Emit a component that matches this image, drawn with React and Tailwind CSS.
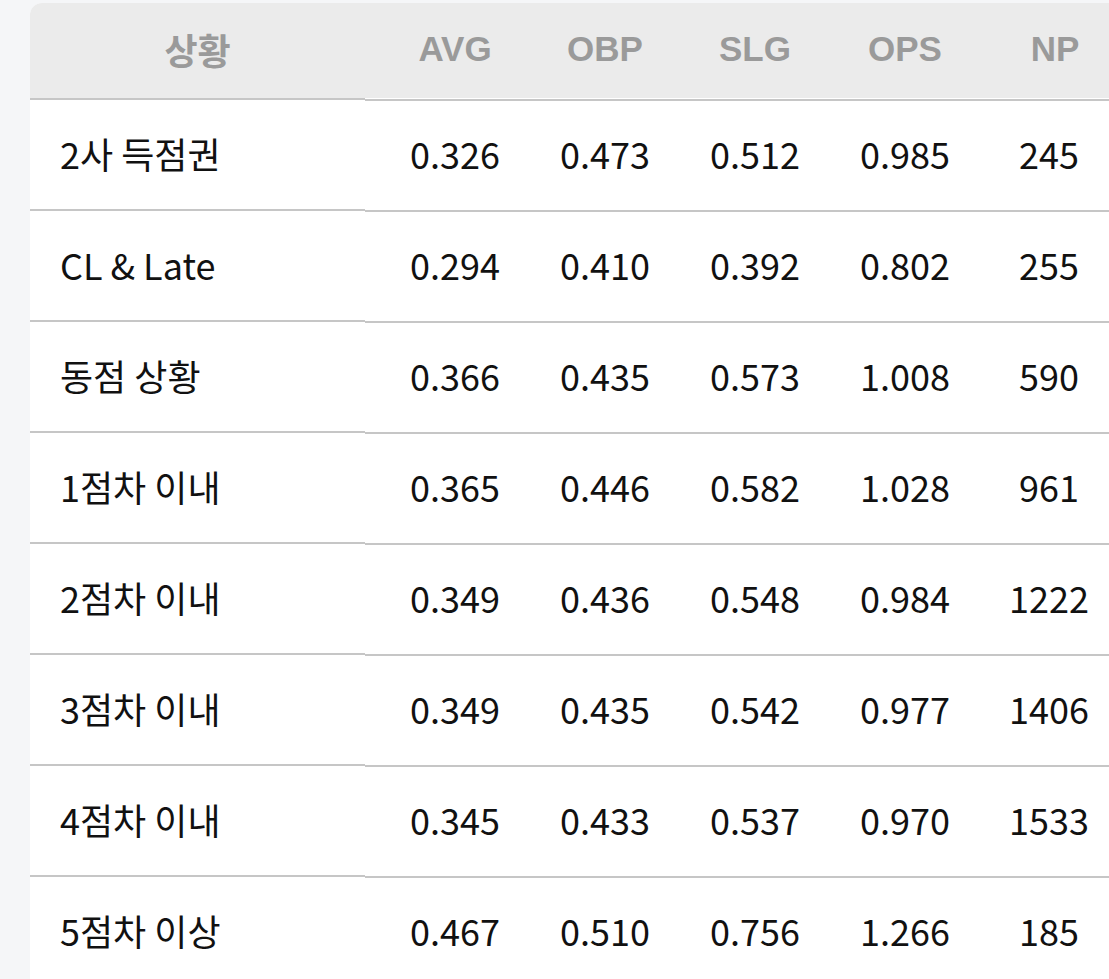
import React from 'react'

const rows = [
    ["2사 득점권", "0.326", "0.473", "0.512", "0.985", "245"],
    ["CL & Late", "0.294", "0.410", "0.392", "0.802", "255"],
    ["동점 상황", "0.366", "0.435", "0.573", "1.008", "590"],
    ["1점차 이내", "0.365", "0.446", "0.582", "1.028", "961"],
    ["2점차 이내", "0.349", "0.436", "0.548", "0.984", "1222"],
    ["3점차 이내", "0.349", "0.435", "0.542", "0.977", "1406"],
    ["4점차 이내", "0.345", "0.433", "0.537", "0.970", "1533"],
    ["5점차 이상", "0.467", "0.510", "0.756", "1.266", "185"],
]

const heads = ["AVG", "OBP", "SLG", "OPS", "NP"]

function App() {
    return (
        <div className="w-[1109px] h-[979px] overflow-hidden bg-[#f5f6f8] pl-[30px] pt-[3px]">
            <div className="w-[1110px] bg-white rounded-tl-[12px] overflow-hidden">
                <div className="flex h-[95px] items-center pb-[3px] bg-[#ebebeb] text-[#9a9a9a] font-bold text-[35px]">
                    <div className="w-[335px] text-center font-['Noto_Sans_CJK_KR',sans-serif] text-[36px]">상황</div>
                    <div className="w-[15px]" />
                    {heads.map((h) => (
                        <div key={h} className="w-[150px] text-center font-['Liberation_Sans',Arial,sans-serif]">{h}</div>
                    ))}
                </div>
                {rows.map((r) => (
                    <div key={r[0]} className="flex flex-col">
                        <div className="flex">
                            <div className="h-[2px] w-[335px] bg-[#c6c6c6]" />
                            <div className="h-[2px] flex-1 bg-[#c6c6c6] translate-y-[1px]" />
                        </div>
                        <div className="flex h-[109px] items-center pb-[4px] text-[36px] text-[#111] font-['Noto_Sans_CJK_KR','Noto_Sans',sans-serif]">
                            <div className="w-[350px] pl-[30px]">{r[0]}</div>
                            {r.slice(1).map((v, i) => (
                                <div key={i} className={`${i === 4 ? 'w-[138px]' : 'w-[150px]'} text-center`}>{v}</div>
                            ))}
                        </div>
                    </div>
                ))}
            </div>
        </div>
    )
}

export default App
